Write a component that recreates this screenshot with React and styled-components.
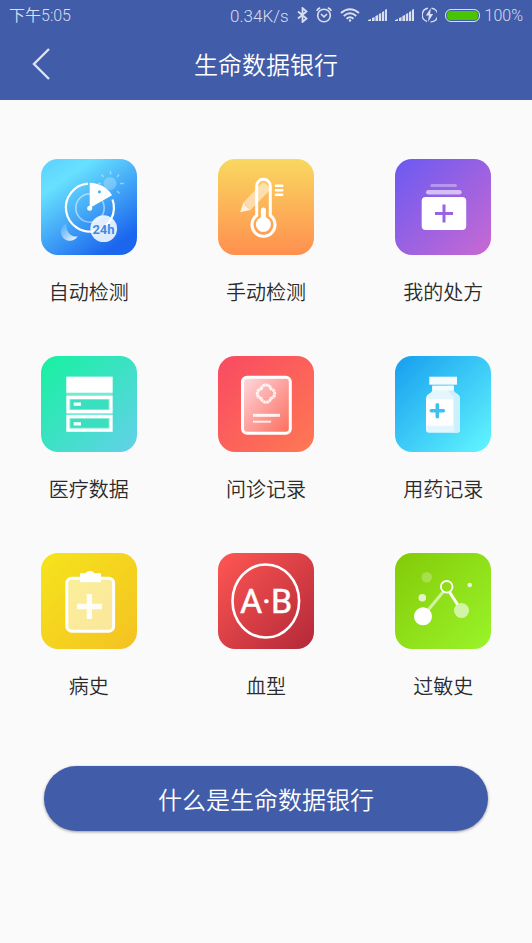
import React from "react";
import styled, { createGlobalStyle } from "styled-components";

// Tile drawings, all on a 96 x 96 canvas
const AutoCheckIcon = () => (
  <svg viewBox="0 0 96 96" fill="none" aria-hidden="true">
    <circle cx="69" cy="24.5" r="6.5" fill="#fff" opacity="0.25" />
    <path
      d="M69.5 12v3.5M60.5 15.5l2 2.5M78 15.5l-2 2.5M79 24.5h4M76 32l2.5 2.5M57 24.5h3"
      stroke="#fff"
      strokeWidth="1.5"
      opacity="0.4"
    />
    <circle cx="49" cy="49" r="14.2" stroke="#fff" strokeWidth="1.6" opacity="0.5" />
    <path d="M71.5 40.5A24 24 0 1 1 47 24.7" stroke="#fff" strokeWidth="2.2" />
    <path
      fillRule="evenodd"
      d="M48.7 49V23.7C58 24 66.5 28 71 36.2ZM58.4 31.2a1.6 1.6 0 1 0 0 3.2a1.6 1.6 0 0 0 0-3.2Z"
      fill="#fff"
    />
    <circle cx="48.7" cy="49.3" r="2.5" fill="#fff" />
    <path d="M25.5 64.5A9 9 0 1 0 36.7 77.2C29.5 79 24 71.5 25.5 64.5Z" fill="url(#moon)" />
    <circle cx="62.7" cy="69.7" r="13.4" fill="#fff" opacity="0.85" />
    <text x="62.5" y="75" textAnchor="middle" fontSize="13" fontWeight="700" fontFamily="Roboto, sans-serif" fill="#3f8ce8">
      24h
    </text>
    <defs>
      <linearGradient id="moon" x1="0" y1="0" x2="1" y2="1">
        <stop offset="0.1" stopColor="#fff" stopOpacity="0.1" />
        <stop offset="1" stopColor="#fff" />
      </linearGradient>
    </defs>
  </svg>
);

const ManualCheckIcon = () => (
  <svg viewBox="0 0 96 96" fill="none" aria-hidden="true">
    <path d="M25.5 43.5L43 25q2.5-2.5 5 0l3 3q2 2 0 4L32.5 51Z" fill="#fff" opacity="0.5" />
    <path d="M25.5 43.5l2.2 3.3l4.8 4.2L22 53.3Z" fill="#fff" opacity="0.8" />
    <path
      d="M38.7 56.5V27a6.8 6.8 0 0 1 13.6 0v29.5a11.5 11.5 0 1 1-13.6 0Z"
      stroke="#fff"
      strokeWidth="3"
    />
    <circle cx="45.4" cy="65.5" r="7.5" fill="#fff" />
    <path d="M45.4 51v12" stroke="#fff" strokeWidth="5" strokeLinecap="round" />
    <path d="M58 26.7h6.2M58 31.2h6.2M58 35.7h6.2" stroke="#fff" strokeWidth="2.6" strokeLinecap="round" />
  </svg>
);

const PrescriptionIcon = () => (
  <svg viewBox="0 0 96 96" fill="none" aria-hidden="true">
    <rect x="35.3" y="25" width="26.7" height="3" rx="1.5" fill="#fff" opacity="0.35" />
    <rect x="31" y="31" width="35.7" height="4.6" rx="2.3" fill="#fff" opacity="0.6" />
    <rect x="26.7" y="38" width="44.5" height="33" rx="4" fill="#fff" />
    <path d="M49 45.5v18M40 54.5h18" stroke="#9a62e4" strokeWidth="3" />
  </svg>
);

const MedicalDataIcon = () => (
  <svg viewBox="0 0 96 96" fill="none" aria-hidden="true">
    <rect x="25.3" y="20.7" width="46.3" height="55" fill="#fff" opacity="0.3" />
    <rect x="25.3" y="20.7" width="46.3" height="16" fill="#fff" />
    <path d="M27 41.3h43v14.4h-43ZM27 60.5h43v13.7h-43Z" fill="#3adfc0" stroke="#fff" strokeWidth="3.2" />
    <path d="M29 43.3h39v10.4h-39ZM29 62.5h39v9.7h-39Z" stroke="#fff" strokeWidth="1" opacity="0.4" />
    <path d="M32.7 48.2H40M32.7 67.8H40" stroke="#fff" strokeWidth="3.2" />
  </svg>
);

const ConsultIcon = () => (
  <svg viewBox="0 0 96 96" fill="none" aria-hidden="true">
    <rect x="24.5" y="21.2" width="47.8" height="56" rx="4.5" fill="url(#sheet)" stroke="#fff" strokeWidth="3" />
    <path
      d="M43.2 32.8a4.9 4.9 0 0 1 9.6 0a4.9 4.9 0 0 1 0 9.6a4.9 4.9 0 0 1-9.6 0a4.9 4.9 0 0 1 0-9.6Z"
      stroke="#fff"
      strokeWidth="3"
      strokeDasharray="2.6 0.4"
      opacity="0.85"
    />
    <path d="M35 59.3h27" stroke="#fff" strokeWidth="3" opacity="0.9" />
    <path d="M35 65.7h18" stroke="#fff" strokeWidth="2" opacity="0.8" />
    <defs>
      <linearGradient id="sheet" x1="0" y1="0" x2="1" y2="1">
        <stop offset="0" stopColor="#fff" stopOpacity="0.8" />
        <stop offset="0.95" stopColor="#fff" stopOpacity="0.05" />
      </linearGradient>
    </defs>
  </svg>
);

const MedicationIcon = () => (
  <svg viewBox="0 0 96 96" fill="none" aria-hidden="true">
    <path d="M34.3 20.7H62v8H34.3Z" fill="#f3fbff" />
    <path
      d="M37.3 29.7h21.4v4c0 4 6.3 3.5 6.3 9v31q0 3-3 3H34q-3 0-3-3v-31c0-5.5 6.3-5 6.3-9Z"
      fill="#e3f6fe"
    />
    <path d="M53 29.7h5.7v4c0 4 6.3 3.5 6.3 9v31q0 3-3 3h-5q2-1 2-3V43q0-4-3-5q-3-2-3-5Z" fill="#cdf0fd" />
    <path d="M37.3 29.7h21.4v4.3q-9 1-21.4 0Z" fill="#f5fcff" />
    <path d="M31 43.3h25q2 0 2 2v22.4q0 2-2 2H31Z" fill="#fff" />
    <path d="M42.3 48.7v12M36.3 54.7h12" stroke="#3fc1f0" strokeWidth="3.6" strokeLinecap="round" />
  </svg>
);

const HistoryIcon = () => (
  <svg viewBox="0 0 96 96" fill="none" aria-hidden="true">
    <rect x="25.8" y="25.2" width="46.8" height="53" rx="5" fill="#fff" fillOpacity="0.55" stroke="#fff" strokeWidth="3" />
    <path d="M39 20.3h5.5q1.5-2.3 4.5-2.3t4.5 2.3H60v9H39Z" fill="#fff" />
    <path d="M48.4 41v25M36 53.5h25" stroke="#fff" strokeWidth="5.4" opacity="0.9" />
  </svg>
);

const BloodTypeIcon = () => (
  <svg viewBox="0 0 96 96" fill="none" aria-hidden="true">
    <ellipse cx="47.8" cy="48" rx="33.3" ry="36.5" stroke="#fff" strokeWidth="2.6" />
    <text
      x="48"
      y="59.5"
      textAnchor="middle"
      fontSize="34"
      fontWeight="400"
      fontFamily="Roboto, sans-serif"
      fill="#fff"
      stroke="#fff"
      strokeWidth="0.5"
    >
      A·B
    </text>
  </svg>
);

const AllergyIcon = () => (
  <svg viewBox="0 0 96 96" fill="none" aria-hidden="true">
    <path d="M29 62L48.5 38.5" stroke="#fff" strokeWidth="3" opacity="0.6" />
    <path d="M54.5 39L63.5 53" stroke="#fff" strokeWidth="3" />
    <circle cx="51.7" cy="33.8" r="5.8" stroke="#fff" strokeWidth="1.8" />
    <circle cx="28" cy="63.3" r="9" fill="#fff" />
    <circle cx="66.5" cy="57.5" r="7.5" fill="#d2f5a5" />
    <circle cx="31.7" cy="24.3" r="5.2" fill="#fff" opacity="0.25" />
    <circle cx="27.3" cy="44.7" r="3.8" fill="#fff" opacity="0.75" />
    <circle cx="74.7" cy="32" r="2.3" fill="#fff" opacity="0.8" />
  </svg>
);

// Status bar drawings
const BluetoothIcon = () => (
  <svg width="11" height="16" viewBox="0 0 11 16" fill="none" stroke="currentColor" strokeWidth="1.8" aria-hidden="true">
    <path d="M1 4.5l8.5 7L5.5 15V1l4 3.5l-8.5 7" />
  </svg>
);

const AlarmIcon = () => (
  <svg width="16" height="16" viewBox="0 0 16 16" fill="none" stroke="currentColor" strokeWidth="1.6" aria-hidden="true">
    <circle cx="8" cy="8.5" r="6.3" />
    <path d="M5 7l3 2.8L11 7M0.8 4Q1.5 1.5 4.2 0.9M15.2 4Q14.5 1.5 11.8 0.9" />
  </svg>
);

const WifiIcon = () => (
  <svg width="20" height="14" viewBox="0 0 20 14" fill="none" stroke="currentColor" strokeWidth="2" aria-hidden="true">
    <path d="M1 5Q10-2.5 19 5M3.8 8Q10 2.6 16.2 8M6.5 10.8Q10 7.8 13.5 10.8" />
    <circle cx="10" cy="12.5" r="1.2" fill="currentColor" stroke="none" />
  </svg>
);

const SignalIcon = () => (
  <svg width="19" height="14" viewBox="0 0 19 14" aria-hidden="true">
    <path
      d="M0 13v-1l3-1v2ZM4 13v-3l2.6-1v4ZM7.4 13V8L10 7v6ZM10.8 13V6l2.4-1v8ZM14 13V4l2.2-1v10ZM17 13V1.8L19 1v12Z"
      fill="currentColor"
    />
  </svg>
);

const ChargeIcon = () => (
  <svg width="15" height="16" viewBox="0 0 15 16" fill="none" aria-hidden="true">
    <path d="M6 1.3A6.8 6.8 0 0 0 5 14.5M9.5 1.3A6.8 6.8 0 0 1 8.5 14.9" stroke="currentColor" strokeWidth="1.4" />
    <path d="M8.8 1L3.8 8.5h3L6 15l5.2-8H8.2Z" fill="currentColor" />
  </svg>
);

const menu = [
  { label: "自动检测", icon: AutoCheckIcon, fill: "linear-gradient(145deg, #5ccfff 0%, #67e1ff 22%, #1b66ee 85%)" },
  { label: "手动检测", icon: ManualCheckIcon, fill: "linear-gradient(180deg, #f9d860, #ff8f4f)" },
  { label: "我的处方", icon: PrescriptionIcon, fill: "linear-gradient(135deg, #6a5af2, #c969d2)" },
  { label: "医疗数据", icon: MedicalDataIcon, fill: "linear-gradient(135deg, #16f29f, #64d0ea)" },
  { label: "问诊记录", icon: ConsultIcon, fill: "linear-gradient(135deg, #f94a62, #ff7854)" },
  { label: "用药记录", icon: MedicationIcon, fill: "linear-gradient(135deg, #169eee, #62f6ff)" },
  { label: "病史", icon: HistoryIcon, fill: "linear-gradient(135deg, #f5e41c, #f4c222)" },
  { label: "血型", icon: BloodTypeIcon, fill: "linear-gradient(135deg, #ff5753, #b32838)" },
  { label: "过敏史", icon: AllergyIcon, fill: "linear-gradient(135deg, #84ca08, #9af42a)" },
];

const App = () => {
  return (
    <>
      <GlobalStyle />
      <Header>
        <StatusBar>
          <StatusText>下午5:05</StatusText>
          <StatusGroup>
            <StatusText $large>0.34K/s</StatusText>
            <BluetoothIcon />
            <AlarmIcon />
            <WifiIcon />
            <SignalIcon />
            <SignalIcon />
            <ChargeIcon />
            <BatteryGroup>
              <Battery />
              <StatusText>100%</StatusText>
            </BatteryGroup>
          </StatusGroup>
        </StatusBar>
        <TitleBar>
          <BackButton type="button" aria-label="返回">
            <svg width="18" height="32" viewBox="0 0 18 32" fill="none" stroke="currentColor" strokeWidth="2.4" aria-hidden="true">
              <path d="M17 1L2 16l15 15" />
            </svg>
          </BackButton>
          <Title>生命数据银行</Title>
        </TitleBar>
      </Header>

      <Content>
        <MenuGrid>
          {menu.map(({ label, icon: Icon, fill }) => (
            <MenuItem key={label} href="#">
              <Tile $fill={fill}>
                <Icon />
              </Tile>
              <Label>{label}</Label>
            </MenuItem>
          ))}
        </MenuGrid>
        <InfoButton type="button">什么是生命数据银行</InfoButton>
      </Content>
    </>
  );
};

const GlobalStyle = createGlobalStyle`
  * {
    box-sizing: border-box;
  }
  body {
    margin: 0;
    background-color: #fafafa;
    font-family: "Noto Sans CJK SC", sans-serif;
    font-weight: 350;
  }
  svg {
    display: block;
  }
`;

const Header = styled.header`
  background-color: #415ca8;
  color: #fff;
`;

const StatusBar = styled.div`
  display: flex;
  justify-content: space-between;
  align-items: center;
  height: 30px;
  padding: 0 9px;
  color: #d9def0;
`;

const StatusGroup = styled.div`
  display: flex;
  align-items: center;
  gap: 8px;
`;

const BatteryGroup = styled.div`
  display: flex;
  align-items: center;
  gap: 5px;
`;

const StatusText = styled.span`
  padding-top: 2px;
  font-family: Roboto, "Noto Sans CJK SC", sans-serif;
  font-size: ${(props) => (props.$large ? "17px" : "16px")};
  line-height: 28px;
`;

const Battery = styled.span`
  width: 35px;
  height: 13px;
  border: 1px solid #d9def0;
  border-radius: 6px;
  background-color: #49c400;
  box-shadow: inset 0 0 0 1px #415ca8;
`;

const TitleBar = styled.div`
  display: grid;
  grid-template-columns: 84px 1fr 84px;
  align-items: center;
  height: 70px;
  padding-bottom: 2px;
`;

const BackButton = styled.button`
  display: flex;
  padding: 0 0 0 32px;
  border: none;
  background: none;
  color: #dde2f1;
  cursor: pointer;
`;

const Title = styled.h1`
  margin: 0;
  font-size: 24px;
  font-weight: 350;
  line-height: 32px;
  text-align: center;
`;

const Content = styled.main`
  padding: 59px 0 48px;
`;

const MenuGrid = styled.nav`
  display: grid;
  grid-template-columns: repeat(3, 1fr);
  row-gap: 48px;
`;

const MenuItem = styled.a`
  display: flex;
  flex-direction: column;
  align-items: center;
  gap: 21px;
  color: #2b2b2b;
  text-decoration: none;
`;

const Tile = styled.span`
  width: 96px;
  height: 96px;
  border-radius: 17px;
  background: ${(props) => props.$fill};
`;

const Label = styled.span`
  font-size: 20px;
  line-height: 32px;
`;

const InfoButton = styled.button`
  display: block;
  width: calc(100% - 88px);
  height: 65px;
  margin: 64px auto 0;
  padding: 0;
  border: none;
  border-radius: 33px;
  background-color: #415ca8;
  box-shadow: 0 1px 3px rgba(0, 0, 0, 0.4);
  color: #fff;
  font-family: inherit;
  font-size: 24px;
  font-weight: 350;
  cursor: pointer;
`;

export default App;
